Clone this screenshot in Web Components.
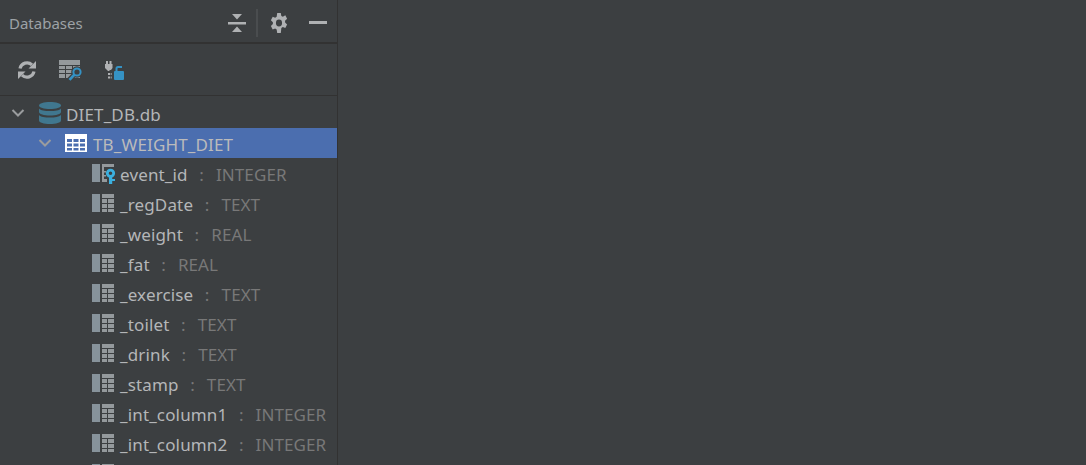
<!DOCTYPE html>
<html>
<head>
<meta charset="utf-8">
<title>Databases</title>
<style>
  html, body { margin: 0; height: 100%; background: #3c3f41; overflow: hidden; }
  body { font-family: "Noto Sans", "Open Sans", sans-serif; font-size: 17px; color: #b4b6b8; }
</style>
</head>
<body>

<db-panel>
  <tool-header slot="header" title="Databases"></tool-header>
  <tool-bar slot="toolbar"></tool-bar>
  <tree-row level="0" kind="db" open label="DIET_DB.db"></tree-row>
  <tree-row level="1" kind="table" open selected label="TB_WEIGHT_DIET"></tree-row>
  <tree-row level="2" kind="key" label="event_id" type="INTEGER"></tree-row>
  <tree-row level="2" kind="column" label="_regDate" type="TEXT"></tree-row>
  <tree-row level="2" kind="column" label="_weight" type="REAL"></tree-row>
  <tree-row level="2" kind="column" label="_fat" type="REAL"></tree-row>
  <tree-row level="2" kind="column" label="_exercise" type="TEXT"></tree-row>
  <tree-row level="2" kind="column" label="_toilet" type="TEXT"></tree-row>
  <tree-row level="2" kind="column" label="_drink" type="TEXT"></tree-row>
  <tree-row level="2" kind="column" label="_stamp" type="TEXT"></tree-row>
  <tree-row level="2" kind="column" label="_int_column1" type="INTEGER"></tree-row>
  <tree-row level="2" kind="column" label="_int_column2" type="INTEGER"></tree-row>
  <tree-row level="2" kind="column" label="" type=""></tree-row>
</db-panel>

<script>
// svg for every icon in one place
const COLUMN_CELLS = `<g fill="#3c3f41">
      <rect x="10" y="4" width="12" height="1"/><rect x="10" y="9" width="12" height="1"/><rect x="10" y="14" width="12" height="1"/>
      <rect x="15" y="4" width="1" height="14"/>
    </g>`;

const ICONS = {
  chevron: `<svg width="14" height="14" viewBox="0 0 14 14"><path d="M1.500 4 L7 9.500 L12.500 4" fill="none" stroke="#9a9c9e" stroke-width="2"/></svg>`,
  db: `<svg width="24" height="22" viewBox="0 0 24 22">
    <path d="M1 3.500C1 1.500 6 0 12 0s11 1.500 11 3.500S18 7 12 7 1 5.500 1 3.500Z" fill="#40778f"/>
    <path d="M1 6.500C2.500 8.500 7 9 12 9s9.500-.5 11-2.500V10c0 2-5 3.500-11 3.500S1 12 1 10Z" fill="#40778f"/>
    <path d="M1 13C2.500 15 7 15.500 12 15.500S21 15 23 13v5.500C23 20.500 18 22 12 22S1 20.500 1 18.500Z" fill="#40778f"/>
  </svg>`,
  table: `<svg width="22" height="18" viewBox="0 0 22 18">
    <rect width="22" height="18" fill="#fff"/>
    <g fill="#4b6eaf">
      <rect x="2" y="5" width="5" height="3"/><rect x="8.500" y="5" width="5" height="3"/><rect x="15" y="5" width="5" height="3"/>
      <rect x="2" y="9.500" width="5" height="3"/><rect x="8.500" y="9.500" width="5" height="3"/><rect x="15" y="9.500" width="5" height="3"/>
      <rect x="2" y="14" width="5" height="2.500"/><rect x="8.500" y="14" width="5" height="2.500"/><rect x="15" y="14" width="5" height="2.500"/>
    </g>
  </svg>`,
  column: `<svg width="22" height="18" viewBox="0 0 22 18">
    <rect width="8" height="18" fill="#87939b"/>
    <rect x="10" width="12" height="18" fill="#94999c"/>
    ${COLUMN_CELLS}
  </svg>`,
  key: `<svg width="24" height="22" viewBox="0 -2 24 22">
    <rect width="8" height="18" fill="#87939b"/>
    <path d="M10 0H22V3H10Z M10 3H12V18H10Z M12 7h2v1.500h-2Z M12 11h2v1.500h-2Z M12 15h3v3h-3Z" fill="#94999c"/>
    <circle cx="18.500" cy="9.300" r="3.200" fill="none" stroke="#3bb0df" stroke-width="2.800"/>
    <path d="M17 12h3.200v3h2.800v2h-2.800v3h-3.200Z" fill="#3bb0df"/>
  </svg>`,
  refresh: `<svg width="20" height="20" viewBox="0 0 20 20">
    <path d="M3 8.500A7.200 7.200 0 0 1 15 4.800M17 11.500A7.200 7.200 0 0 1 5 15.200" fill="none" stroke="#afb1b3" stroke-width="3.200"/>
    <path d="M11.500 8.500H19V1Z M8.500 11.500H1V19Z" fill="#afb1b3"/>
  </svg>`,
  tableSearch: `<svg width="23" height="21" viewBox="0 0 23 21">
    <rect width="21" height="18" fill="#94999c"/>
    <g fill="#3c3f41">
      <rect y="5" width="21" height="1"/><rect y="9" width="21" height="1"/><rect y="13" width="21" height="1"/>
      <rect x="6" y="5" width="1" height="13"/><rect x="13" y="5" width="1" height="13"/>
    </g>
    <circle cx="18" cy="12" r="5.800" fill="#3c3f41"/>
    <path d="M15 15 L9 21" stroke="#3c3f41" stroke-width="5"/>
    <circle cx="18" cy="12" r="3.600" fill="none" stroke="#3592c4" stroke-width="2"/>
    <path d="M15.500 14.500 L10.500 19.800" stroke="#3592c4" stroke-width="2.600"/>
  </svg>`,
  plug: `<svg width="19" height="19" viewBox="0 0 19 19">
    <path d="M0 3h1V0h2v3h1.500V0h2v3h1v4L6 9H4.500v1h-2V9H2L0 7Z" fill="#afb1b3"/>
    <rect x="3" y="12" width="2" height="2" fill="#afb1b3"/><rect x="5.500" y="12" width="1.500" height="2" fill="#7f8487"/>
    <rect x="3" y="15.500" width="2" height="2" fill="#afb1b3"/><rect x="5.500" y="15.500" width="1.500" height="2" fill="#7f8487"/>
    <path d="M11.500 10V7.500A1.500 1.500 0 0 1 13 6h4" fill="none" stroke="#3592c4" stroke-width="2"/>
    <rect x="9" y="10" width="10" height="9" rx="1" fill="#3592c4"/>
  </svg>`,
  collapse: `<svg width="18" height="18" viewBox="0 0 18 18">
    <path d="M4 0h10L9 5.500Z M4 18h10L9 12.500Z" fill="#afb1b3"/>
    <rect y="8" width="18" height="2.500" fill="#afb1b3"/>
  </svg>`,
  gear: `<svg width="18" height="20" viewBox="0 0 20 20" preserveAspectRatio="none">
    <path fill-rule="evenodd" fill="#afb1b3" d="M8 0h4l.6 3 1.700.8 2.700-1.500 2 3.400-2.300 2 .1 1.800 2.200 2-2 3.500-2.800-1-1.600 1L12 20H8l-.6-3.400-1.700-1-2.700 1L1 13.100l2.200-2V9.200L1 7.200l2-3.400 2.700 1 1.700-1ZM10 6.600a3.400 3.400 0 1 0 0 6.800 3.400 3.400 0 0 0 0-6.800Z"/>
  </svg>`,
  minimize: `<svg width="18" height="3" viewBox="0 0 18 3"><rect width="18" height="3" fill="#afb1b3"/></svg>`
};

class DbPanel extends HTMLElement {
  constructor() {
    super();
    let shadow = this.attachShadow({mode: 'open'});
    shadow.innerHTML = `<style>
      :host { display: block; width: 338px; height: 465px; box-sizing: border-box; border-right: 1px solid #323232; overflow: hidden; }
      .tree { display: flex; flex-direction: column; padding-top: 2px; }
    </style>
    <slot name="header"></slot>
    <slot name="toolbar"></slot>
    <div class="tree"><slot></slot></div>`;
  }
}

class ToolHeader extends HTMLElement {
  constructor() {
    super();
    let shadow = this.attachShadow({mode: 'open'});
    shadow.innerHTML = `<style>
      :host { display: flex; align-items: center; height: 44px; box-sizing: border-box; padding: 3px 10px 0 9px; border-bottom: 2px solid #323232; font-size: 15px; color: #9da2a6; }
      .title { flex: 1; }
      .actions { display: flex; align-items: center; }
      .sep { width: 2px; height: 28px; background: #4a4d4f; margin: 0 12px 0 10px; }
      .gear { margin-right: 21px; }
      .collapse, .gear, .min { display: flex; }
    </style>
    <span class="title">${this.getAttribute('title')}</span>
    <div class="actions">
      <span class="collapse">${ICONS.collapse}</span>
      <span class="sep"></span>
      <span class="gear">${ICONS.gear}</span>
      <span class="min">${ICONS.minimize}</span>
    </div>`;
  }
}

class ToolBar extends HTMLElement {
  constructor() {
    super();
    let shadow = this.attachShadow({mode: 'open'});
    shadow.innerHTML = `<style>
      :host { display: flex; align-items: center; gap: 22px; height: 52px; box-sizing: border-box; padding: 1px 0 0 17px; border-bottom: 1px solid #323232; }
      span { display: flex; }
      span:last-child { margin-left: 1px; }
    </style>
    <span>${ICONS.refresh}</span>
    <span>${ICONS.tableSearch}</span>
    <span>${ICONS.plug}</span>`;
  }
}

class TreeRow extends HTMLElement {
  constructor() {
    super();
    let shadow = this.attachShadow({mode: 'open'});
    let level = Number(this.getAttribute('level'));
    let kind = this.getAttribute('kind');
    let type = this.getAttribute('type');
    let open = this.hasAttribute('open');
    let icon = ICONS[kind];
    shadow.innerHTML = `<style>
      :host { display: flex; align-items: center; height: 30px; white-space: nowrap; color: #b4b6b8; letter-spacing: .15px; }
      :host([selected]) { background: #4b6eaf; color: #bbbbbb; }
      .indent { flex: none; width: ${[11, 38, 92][level]}px; }
      .arrow { flex: none; display: flex; width: 14px; margin-right: ${level == 2 ? 0 : 13}px; }
      .icon { flex: none; display: flex; width: 28px; }
      .name, .sep, .type { padding-top: 2px; }
      .type { color: #787878; letter-spacing: .1px; }
      .sep { color: #787878; padding-left: 11.5px; padding-right: 12px; }
    </style>
    <span class="indent"></span>
    ${open ? `<span class="arrow">${ICONS.chevron}</span>` : ''}
    <span class="icon">${icon}</span>
    <span class="name">${this.getAttribute('label')}</span>
    ${type ? `<span class="sep">:</span><span class="type">${type}</span>` : ''}`;
  }
}

customElements.define('db-panel', DbPanel);
customElements.define('tool-header', ToolHeader);
customElements.define('tool-bar', ToolBar);
customElements.define('tree-row', TreeRow);
</script>
</body>
</html>
